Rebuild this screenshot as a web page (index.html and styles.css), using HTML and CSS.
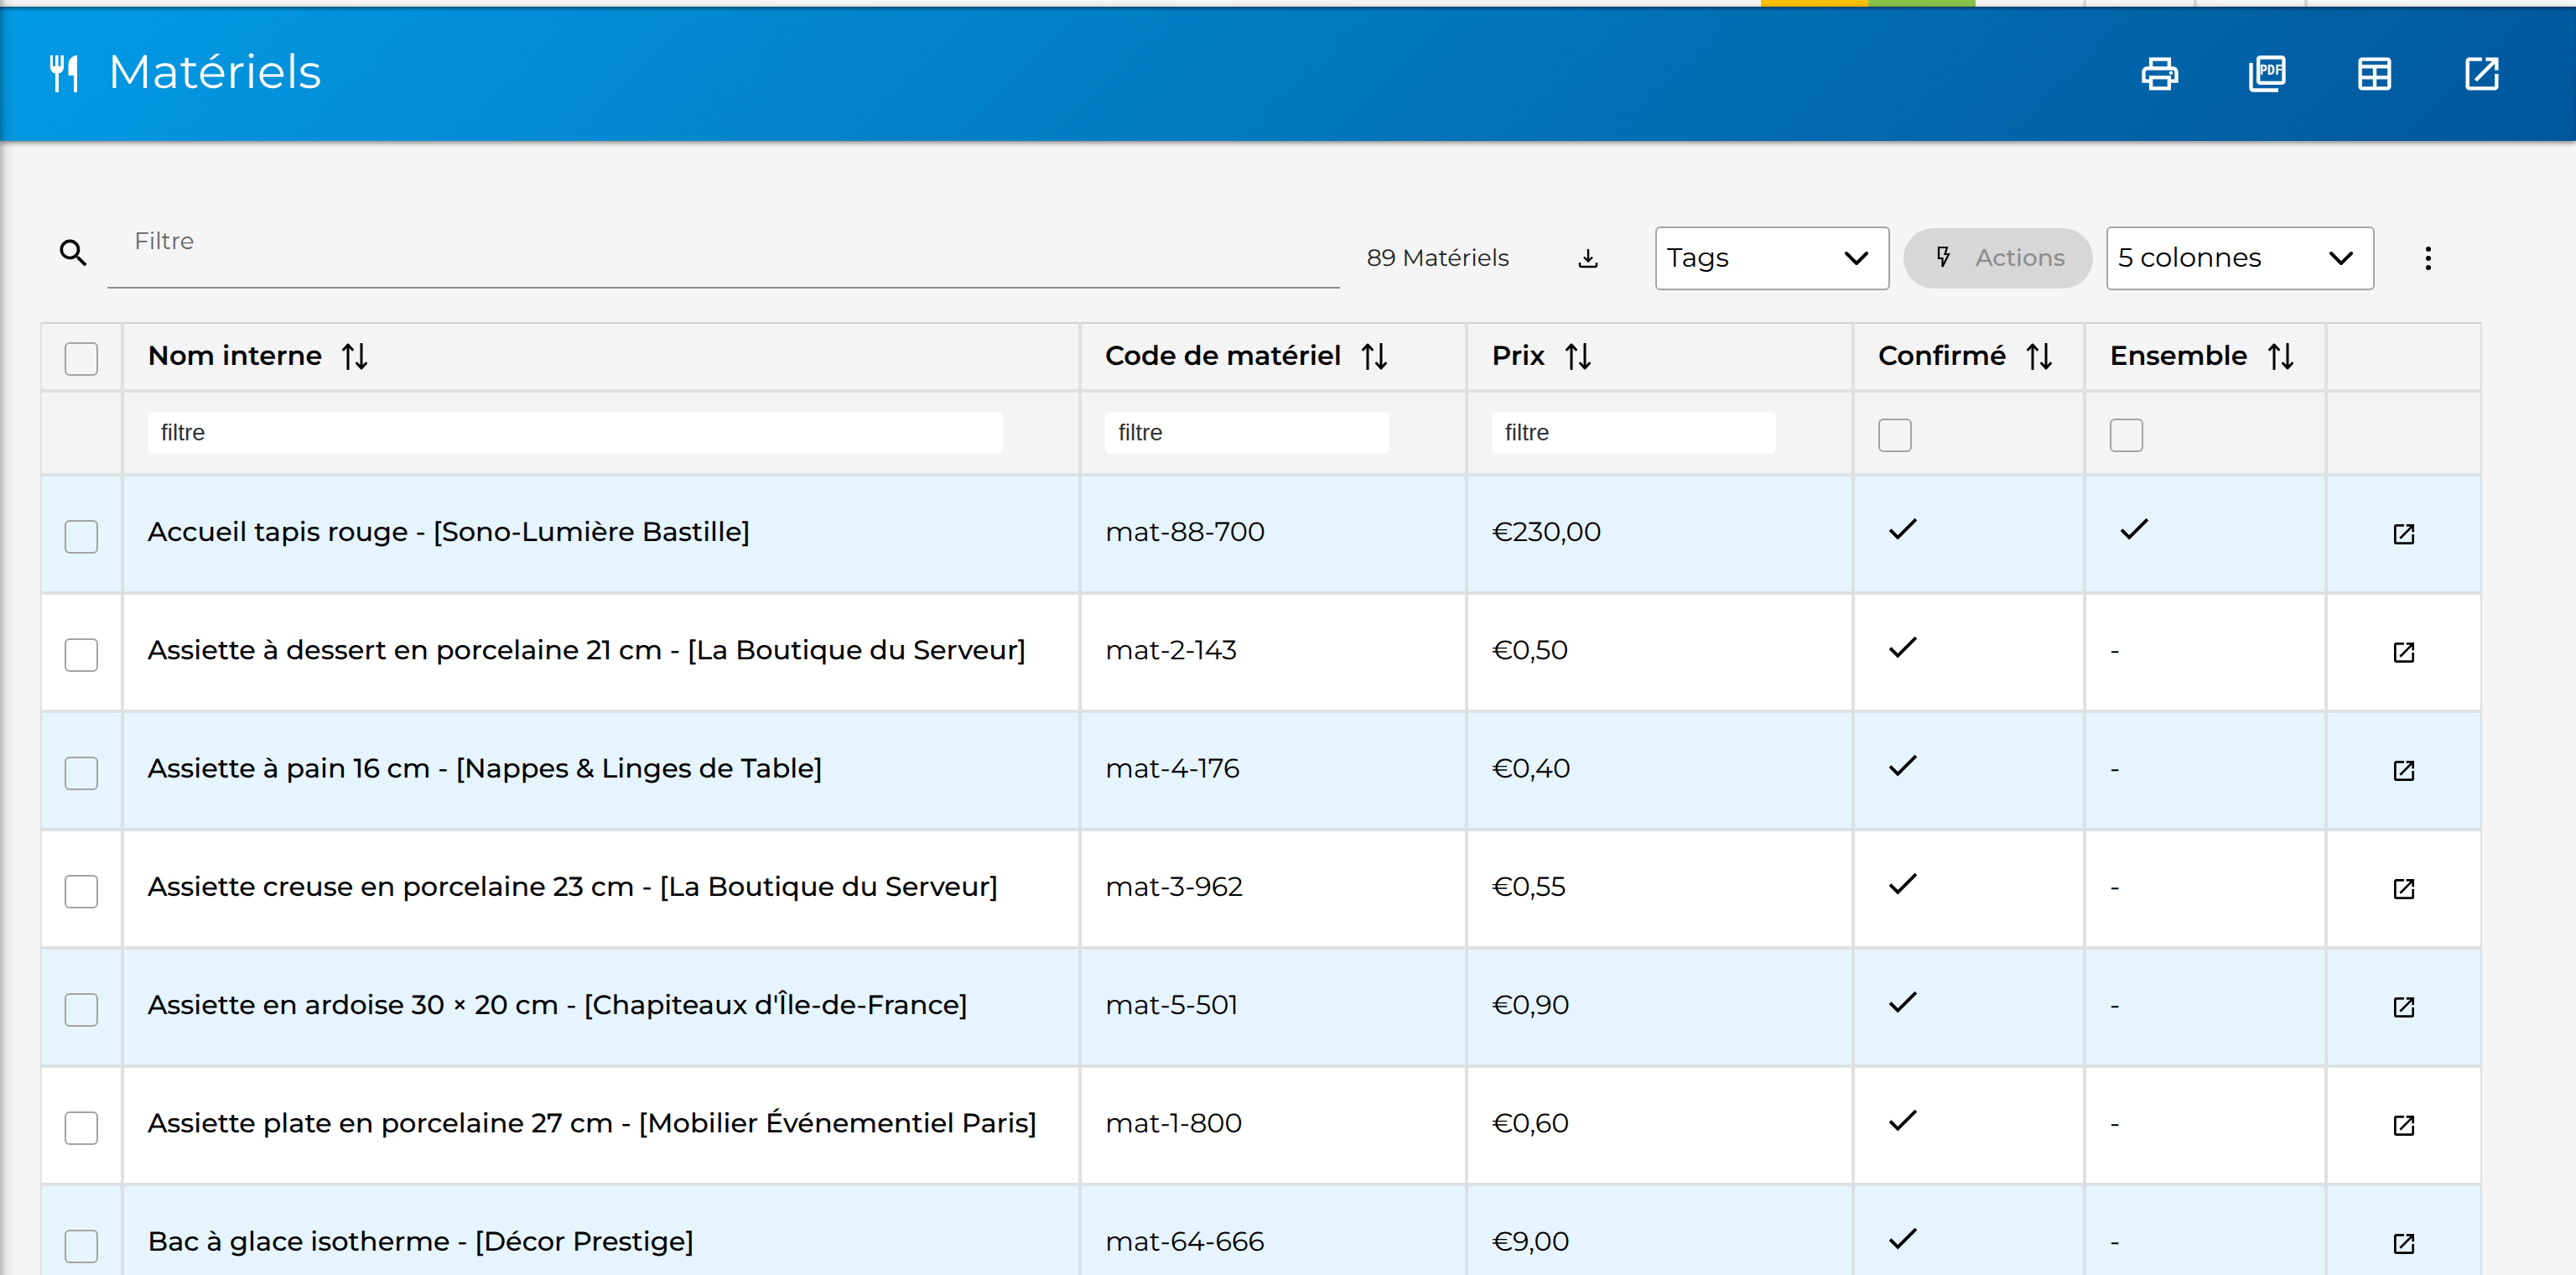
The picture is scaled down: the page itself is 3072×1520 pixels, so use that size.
FILE: index.html
```html
<!DOCTYPE html>
<html lang="fr">

<head>
    <meta charset="UTF-8">
    <meta name="viewport" content="width=device-width, initial-scale=1.0">
    <title>Matériels</title>
    <link rel="stylesheet" href="styles.css">
</head>

<body>
    <!-- Icon sprite -->
    <svg class="sprite" aria-hidden="true">
        <symbol id="i-check" viewBox="0 0 24 24"><path d="M21,7L9,19L3.5,13.5L4.91,12.09L9,16.17L19.59,5.59L21,7Z"/></symbol>
        <symbol id="i-open" viewBox="0 0 24 24"><path d="M14,3V5H17.59L7.76,14.83L9.17,16.24L19,6.41V10H21V3M19,19H5V5H12V3H5C3.89,3 3,3.9 3,5V19A2,2 0 0,0 5,21H19A2,2 0 0,0 21,19V12H19V19Z"/></symbol>
        <symbol id="i-sort" viewBox="0 0 30 32"><path d="M7 31V2M1.5 8L7 2L12.5 8M23 1V30M17.5 24L23 30L28.5 24" fill="none" stroke="currentColor" stroke-width="3" stroke-linecap="round" stroke-linejoin="round"/></symbol>
        <symbol id="i-chevron" viewBox="0 0 28 16"><path d="M2 2L14 14L26 2" fill="none" stroke="currentColor" stroke-width="4" stroke-linecap="round" stroke-linejoin="round"/></symbol>
    </svg>

    <div class="page">
        <div class="top-strip">
            <span class="tab yellow"></span>
            <span class="tab green"></span>
            <span class="tab"></span>
            <span class="tab"></span>
            <span class="tab"></span>
        </div>

        <header class="header">
            <svg class="header-icon" viewBox="0 0 32 44"><path d="M0 0H3V13H6V0H9.5V13H12.5V0H16V14C16 18 13.5 21 10 21.5V44H6V21.5C2.5 21 0 18 0 14ZM32 0V44H28V24H21.5V12C21.5 5 26 0 32 0Z"/></svg>
            <h1>Matériels</h1>
            <nav class="header-actions">
                <button type="button" aria-label="Imprimer">
                    <svg viewBox="0 0 24 24"><path d="M19 8C20.66 8 22 9.34 22 11V17H18V21H6V17H2V11C2 9.34 3.34 8 5 8H6V3H18V8H19M8 5V8H16V5H8M16 19V15H8V19H16M18 15H20V11C20 10.45 19.55 10 19 10H5C4.45 10 4 10.45 4 11V15H6V13H18V15M19 11.5C19 12.05 18.55 12.5 18 12.5C17.45 12.5 17 12.05 17 11.5C17 10.95 17.45 10.5 18 10.5C18.55 10.5 19 10.95 19 11.5Z"/></svg>
                </button>
                <button type="button" aria-label="Exporter en PDF">
                    <svg viewBox="0 0 24 24"><path d="M20 2H8C6.9 2 6 2.9 6 4V16C6 17.1 6.9 18 8 18H20C21.1 18 22 17.1 22 16V4C22 2.9 21.1 2 20 2M20 16H8V4H20V16M4 6H2V20C2 21.1 2.9 22 4 22H18V20H4V6Z"/><text class="pdf-text" x="14" y="12.5" text-anchor="middle">PDF</text></svg>
                </button>
                <button type="button" aria-label="Tableau">
                    <svg viewBox="0 0 24 24"><path fill-rule="evenodd" d="M5 3H19A2 2 0 0 1 21 5V19A2 2 0 0 1 19 21H5A2 2 0 0 1 3 19V5A2 2 0 0 1 5 3ZM5 5V7H19V5ZM5 9V13H11V9ZM13 9V13H19V9ZM5 15V19H11V15ZM13 15V19H19V15Z"/></svg>
                </button>
                <button type="button" aria-label="Ouvrir">
                    <svg viewBox="0 0 24 24"><use href="#i-open"/></svg>
                </button>
            </nav>
        </header>

        <main class="content">
            <div class="toolbar">
                <label class="search-label" for="search" aria-label="Filtre">
                    <svg viewBox="0 0 24 24"><path d="M9.5,3A6.5,6.5 0 0,1 16,9.5C16,11.11 15.41,12.59 14.44,13.73L14.71,14H15.5L20.5,19L19,20.5L14,15.5V14.71L13.73,14.44C12.59,15.41 11.11,16 9.5,16A6.5,6.5 0 0,1 3,9.5A6.5,6.5 0 0,1 9.5,3M9.5,5C7,5 5,7 5,9.5C5,12 7,14 9.5,14C12,14 14,12 14,9.5C14,7 12,5 9.5,5Z"/></svg>
                </label>
                <input class="search" id="search" type="text" placeholder="Filtre">
                <span class="count">89 Matériels</span>
                <button type="button" class="icon-btn download" aria-label="Télécharger">
                    <svg viewBox="0 0 24 24"><path d="M12 1V15M7 10.5L12 15.5L17 10.5M2 17V20A2 2 0 0 0 4 22H20A2 2 0 0 0 22 20V17" fill="none" stroke="currentColor" stroke-width="2.4"/></svg>
                </button>
                <div class="select-wrap tags">
                    <select aria-label="Tags"><option>Tags</option></select>
                    <svg class="chevron"><use href="#i-chevron"/></svg>
                </div>
                <button type="button" class="btn-actions" disabled>
                    <svg viewBox="0 0 16 28"><path d="M2 2H12L9.5 10H14L6.5 25V15H2Z" fill="none" stroke="currentColor" stroke-width="2.2"/></svg>
                    Actions
                </button>
                <div class="select-wrap columns">
                    <select aria-label="Colonnes"><option>5 colonnes</option></select>
                    <svg class="chevron"><use href="#i-chevron"/></svg>
                </div>
                <button type="button" class="icon-btn more" aria-label="Plus">
                    <svg viewBox="0 0 8 28"><circle cx="4" cy="3" r="3"/><circle cx="4" cy="14" r="3"/><circle cx="4" cy="25" r="3"/></svg>
                </button>
            </div>

            <table class="grid">
                <colgroup>
                    <col class="col-select">
                    <col class="col-name">
                    <col class="col-code">
                    <col class="col-price">
                    <col class="col-confirmed">
                    <col class="col-set">
                    <col class="col-open">
                </colgroup>
                <thead>
                    <tr class="titles">
                        <th class="center"><input type="checkbox" aria-label="Tout sélectionner"></th>
                        <th><span class="th-label">Nom interne <svg class="sort"><use href="#i-sort"/></svg></span></th>
                        <th><span class="th-label">Code de matériel <svg class="sort"><use href="#i-sort"/></svg></span></th>
                        <th><span class="th-label">Prix <svg class="sort"><use href="#i-sort"/></svg></span></th>
                        <th><span class="th-label">Confirmé <svg class="sort"><use href="#i-sort"/></svg></span></th>
                        <th><span class="th-label">Ensemble <svg class="sort"><use href="#i-sort"/></svg></span></th>
                        <th></th>
                    </tr>
                    <tr class="filters">
                        <th></th>
                        <th><input type="text" placeholder="filtre" aria-label="Filtrer par nom interne"></th>
                        <th><input type="text" placeholder="filtre" aria-label="Filtrer par code"></th>
                        <th><input type="text" placeholder="filtre" aria-label="Filtrer par prix"></th>
                        <th><input type="checkbox" aria-label="Filtrer confirmé"></th>
                        <th><input type="checkbox" aria-label="Filtrer ensemble"></th>
                        <th></th>
                    </tr>
                </thead>
                <tbody>
                    <tr>
                        <td class="center"><input type="checkbox" aria-label="Sélectionner mat-88-700"></td>
                        <td class="name">Accueil tapis rouge - [Sono-Lumière Bastille]</td>
                        <td>mat-88-700</td>
                        <td>€230,00</td>
                        <td><svg class="check"><use href="#i-check"/></svg></td>
                        <td><svg class="check"><use href="#i-check"/></svg></td>
                        <td class="center"><a href="#" aria-label="Ouvrir"><svg class="open"><use href="#i-open"/></svg></a></td>
                    </tr>
                    <tr>
                        <td class="center"><input type="checkbox" aria-label="Sélectionner mat-2-143"></td>
                        <td class="name">Assiette à dessert en porcelaine 21 cm - [La Boutique du Serveur]</td>
                        <td>mat-2-143</td>
                        <td>€0,50</td>
                        <td><svg class="check"><use href="#i-check"/></svg></td>
                        <td>-</td>
                        <td class="center"><a href="#" aria-label="Ouvrir"><svg class="open"><use href="#i-open"/></svg></a></td>
                    </tr>
                    <tr>
                        <td class="center"><input type="checkbox" aria-label="Sélectionner mat-4-176"></td>
                        <td class="name">Assiette à pain 16 cm - [Nappes &amp; Linges de Table]</td>
                        <td>mat-4-176</td>
                        <td>€0,40</td>
                        <td><svg class="check"><use href="#i-check"/></svg></td>
                        <td>-</td>
                        <td class="center"><a href="#" aria-label="Ouvrir"><svg class="open"><use href="#i-open"/></svg></a></td>
                    </tr>
                    <tr>
                        <td class="center"><input type="checkbox" aria-label="Sélectionner mat-3-962"></td>
                        <td class="name">Assiette creuse en porcelaine 23 cm - [La Boutique du Serveur]</td>
                        <td>mat-3-962</td>
                        <td>€0,55</td>
                        <td><svg class="check"><use href="#i-check"/></svg></td>
                        <td>-</td>
                        <td class="center"><a href="#" aria-label="Ouvrir"><svg class="open"><use href="#i-open"/></svg></a></td>
                    </tr>
                    <tr>
                        <td class="center"><input type="checkbox" aria-label="Sélectionner mat-5-501"></td>
                        <td class="name">Assiette en ardoise 30 × 20 cm - [Chapiteaux d'Île-de-France]</td>
                        <td>mat-5-501</td>
                        <td>€0,90</td>
                        <td><svg class="check"><use href="#i-check"/></svg></td>
                        <td>-</td>
                        <td class="center"><a href="#" aria-label="Ouvrir"><svg class="open"><use href="#i-open"/></svg></a></td>
                    </tr>
                    <tr>
                        <td class="center"><input type="checkbox" aria-label="Sélectionner mat-1-800"></td>
                        <td class="name">Assiette plate en porcelaine 27 cm - [Mobilier Événementiel Paris]</td>
                        <td>mat-1-800</td>
                        <td>€0,60</td>
                        <td><svg class="check"><use href="#i-check"/></svg></td>
                        <td>-</td>
                        <td class="center"><a href="#" aria-label="Ouvrir"><svg class="open"><use href="#i-open"/></svg></a></td>
                    </tr>
                    <tr>
                        <td class="center"><input type="checkbox" aria-label="Sélectionner mat-64-666"></td>
                        <td class="name">Bac à glace isotherme - [Décor Prestige]</td>
                        <td>mat-64-666</td>
                        <td>€9,00</td>
                        <td><svg class="check"><use href="#i-check"/></svg></td>
                        <td>-</td>
                        <td class="center"><a href="#" aria-label="Ouvrir"><svg class="open"><use href="#i-open"/></svg></a></td>
                    </tr>
                </tbody>
            </table>
        </main>
    </div>
</body>

</html>
```
FILE: styles.css
```css
* {
    margin: 0;
    padding: 0;
    box-sizing: border-box;
}

body {
    font-family: Montserrat, Inter, sans-serif;
    font-size: 32px;
    line-height: 40px;
    text-rendering: geometricPrecision;
    color: #000;
    background: #f5f5f5;
}

button,
input,
select {
    font: inherit;
    color: inherit;
}

button {
    border: none;
    background: none;
    cursor: pointer;
}

svg {
    display: block;
    fill: currentColor;
}

.sprite {
    display: none;
}

.page {
    position: relative;
    height: 100vh;
    overflow: hidden;
}

.page::after {
    content: '';
    position: absolute;
    top: 0;
    left: 0;
    bottom: 0;
    width: 18px;
    background: linear-gradient(90deg, rgba(0, 0, 0, 0.24), rgba(0, 0, 0, 0.06) 40%, rgba(0, 0, 0, 0));
    pointer-events: none;
}

.top-strip {
    display: flex;
    justify-content: flex-end;
    height: 8px;
    padding-right: 320px;
}

.tab {
    width: 132px;
    border-right: 4px solid #d8d8d8;
}

.tab.yellow,
.tab.green {
    width: 128px;
    border-right: none;
}

.tab.yellow {
    background: #ffc107;
}

.tab.green {
    background: #8bc34a;
}

/* Header */
.header {
    position: relative;
    display: flex;
    align-items: center;
    height: 160px;
    padding: 0 48px 0 60px;
    color: #fff;
    background: linear-gradient(135deg, #039be5 0%, #01579b 100%);
    box-shadow: 0 2px 6px rgba(0, 0, 0, 0.5), inset 0 4px 4px -2px rgba(0, 0, 0, 0.5);
}

.header-icon {
    width: 32px;
    height: 44px;
    margin-right: 36px;
}

.header h1 {
    flex: 1;
    padding-bottom: 4px;
    font-size: 56px;
    line-height: 72px;
    font-weight: 400;
}

.header-actions {
    display: flex;
}

.header-actions button {
    display: flex;
    justify-content: center;
    width: 128px;
    color: #fff;
}

.header-actions svg {
    width: 52px;
    height: 52px;
}

.pdf-text {
    font: bold 7px 'DejaVu Sans Mono', monospace;
}

/* Toolbar */
.content {
    padding: 88px 112px 0 48px;
}

.toolbar {
    display: flex;
    align-items: center;
    height: 104px;
    margin-bottom: 24px;
    padding-left: 18px;
}

.search-label {
    margin: 0 18px 12px 0;
}

.search-label svg {
    width: 44px;
    height: 44px;
}

.search {
    flex: 1;
    align-self: flex-start;
    min-width: 0;
    height: 88px;
    padding: 0 32px 24px;
    border: none;
    border-bottom: 2px solid #8e8e8e;
    background: none;
    font-size: 28px;
    outline: none;
}

.search::placeholder {
    color: #666;
    opacity: 1;
}

.count {
    width: 236px;
    margin-left: 32px;
    font-size: 28px;
    color: #222;
}

.icon-btn {
    display: flex;
    align-items: center;
    justify-content: center;
}

.download {
    width: 56px;
    margin-right: 52px;
}

.download svg {
    width: 24px;
    height: 24px;
}

.select-wrap {
    position: relative;
}

.select-wrap.tags {
    width: 280px;
}

.select-wrap.columns {
    width: 320px;
}

.select-wrap select {
    display: block;
    width: 100%;
    height: 76px;
    padding: 0 12px 2px;
    appearance: none;
    border: 2px solid #a5a5a5;
    border-radius: 6px;
    background: #fff;
}

.chevron {
    position: absolute;
    top: 30px;
    right: 26px;
    width: 28px;
    height: 16px;
    pointer-events: none;
}

.btn-actions {
    display: flex;
    align-items: center;
    gap: 30px;
    width: 226px;
    height: 72px;
    margin: 0 16px;
    padding: 0 0 2px 40px;
    border-radius: 36px;
    background: #d7d7d7;
    color: #8c8c8c;
    font-size: 28px;
    font-weight: 500;
}

.btn-actions svg {
    width: 16px;
    height: 28px;
    color: #000;
}

.more {
    width: 128px;
}

.more svg {
    width: 8px;
    height: 28px;
}

/* Table */
.grid {
    width: 100%;
    table-layout: fixed;
    border-spacing: 0;
}

.col-select {
    width: 98px;
}

.col-code {
    width: 461px;
}

.col-price {
    width: 461px;
}

.col-confirmed {
    width: 276px;
}

.col-set {
    width: 288px;
}

.col-open {
    width: 186px;
}

.grid th,
.grid td {
    height: 141px;
    padding: 0 28px;
    border: 2px solid #e0e0e0;
    text-align: left;
    vertical-align: middle;
}

.grid th {
    background: #f4f4f4;
    font-weight: 600;
}

.grid td {
    padding-bottom: 4px;
    background: #fff;
    white-space: nowrap;
}

.grid tbody tr:nth-child(odd) td {
    border-color: #d9e1e6;
    background: #e6f4fe;
}

.grid .titles th {
    height: 82px;
    border-top-color: #d2d2d2;
}

.grid .filters th {
    height: 100px;
}

.grid .center {
    padding: 0;
}

.center svg {
    margin: 0 auto;
}

.grid .name {
    font-weight: 500;
}

.th-label {
    display: flex;
    align-items: center;
    gap: 24px;
}

.sort {
    width: 30px;
    height: 32px;
}

.grid input[type="text"] {
    display: block;
    width: calc(100% - 62px);
    height: 50px;
    padding: 0 16px;
    border: none;
    border-radius: 6px;
    background: #fff;
    font: 28px 'Liberation Sans', Arial, sans-serif;
}

.grid input[type="text"]::placeholder {
    color: #333;
    opacity: 1;
}

.grid input[type="checkbox"] {
    display: block;
    width: 40px;
    height: 40px;
    margin-top: 6px;
    appearance: none;
    border: 2px solid #a3a3a3;
    border-radius: 6px;
}

.grid .center input[type="checkbox"] {
    margin: 6px auto 0;
}

.check {
    width: 46px;
    height: 46px;
    margin: 0 0 10px 6px;
}

.open {
    width: 32px;
    height: 32px;
}

.grid a {
    color: inherit;
}
```
